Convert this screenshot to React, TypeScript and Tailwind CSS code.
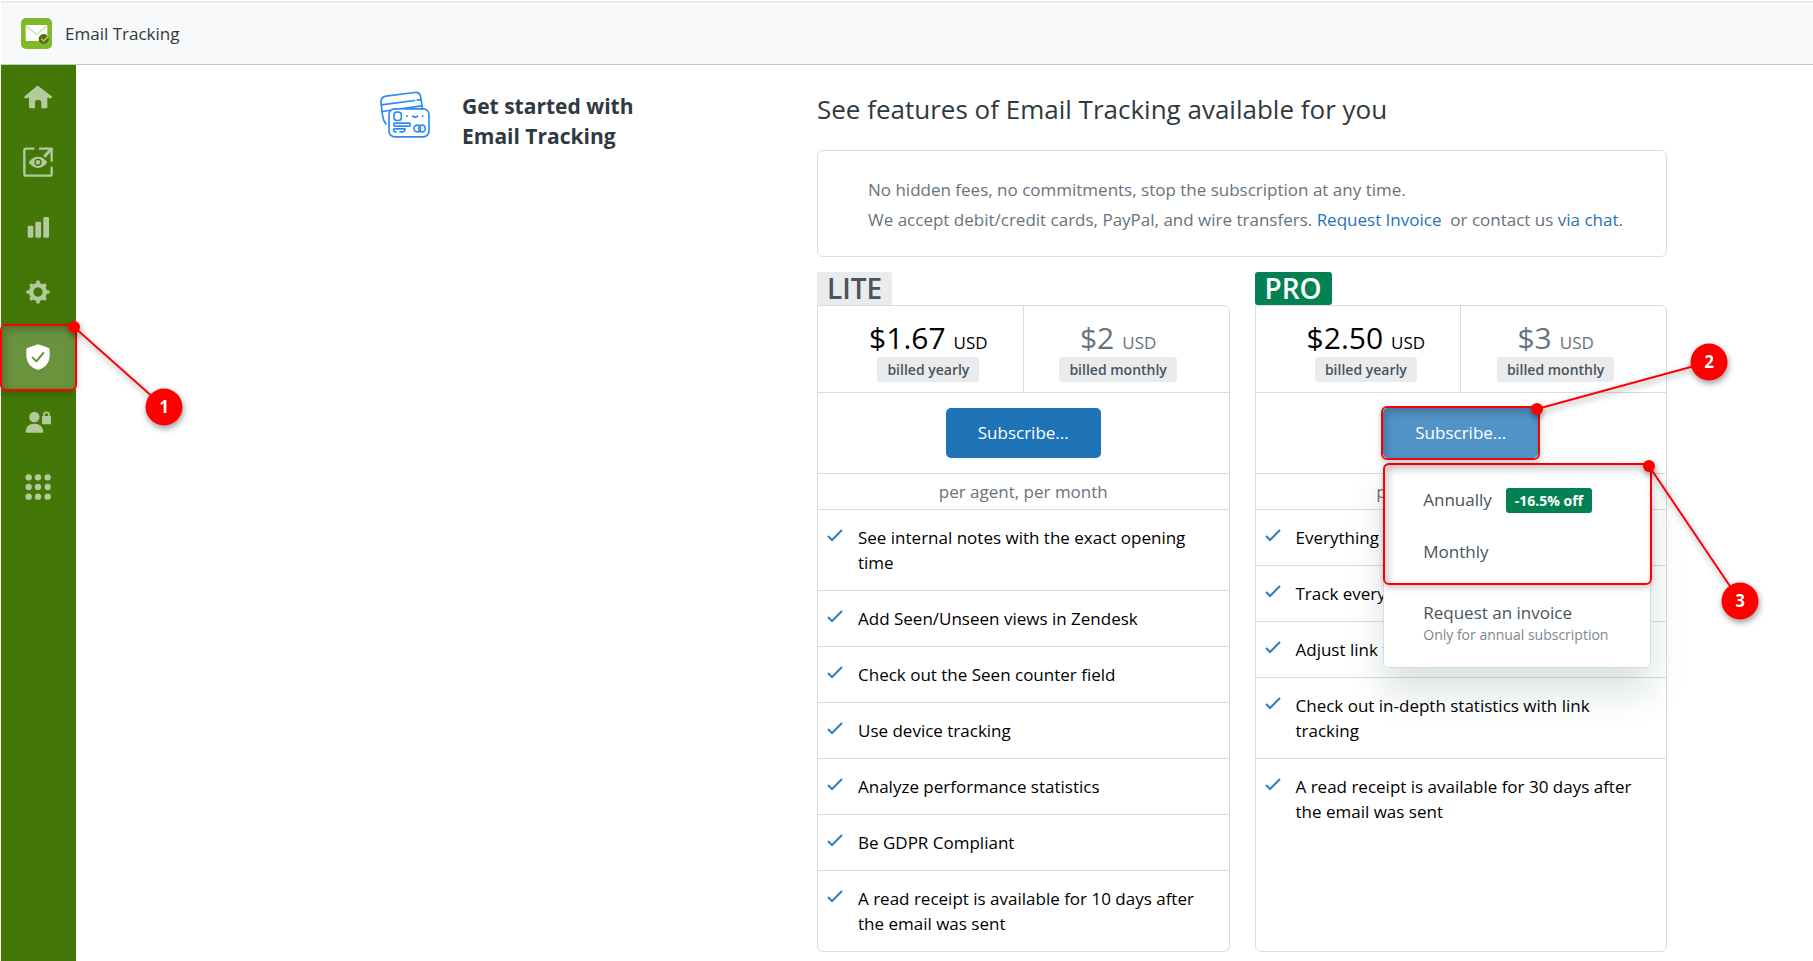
import type { ReactNode } from "react";

const LITE_FEATURES = [
  "See internal notes with the exact opening time",
  "Add Seen/Unseen views in Zendesk",
  "Check out the Seen counter field",
  "Use device tracking",
  "Analyze performance statistics",
  "Be GDPR Compliant",
  "A read receipt is available for 10 days after the email was sent",
];

const PRO_FEATURES = [
  "Everything in Lite",
  "Track every link",
  "Adjust link tracking",
  "Check out in-depth statistics with link tracking",
  "A read receipt is available for 30 days after the email was sent",
];

function NavIcon({ children }: { children: ReactNode }) {
  return (
    <svg viewBox="0 0 90 90" className="size-[30px]" fill="currentColor" aria-hidden="true">
      {children}
    </svg>
  );
}

const NAV: { label: string; icon: ReactNode }[] = [
  {
    label: "Home",
    icon: (
      <NavIcon>
        <path d="M45 11 L86 43 Q89 46 85 49 Q82 51 78 47 L73 47 V75 Q73 79 69 79 H55 V61 Q55 53 45 53 Q36 53 36 61 V79 H22 Q18 79 18 75 V47 L12 48 Q8 51 5 48 Q2 46 5 43 L41 13 Q45 9 49 13 Z" />
      </NavIcon>
    ),
  },
  {
    label: "Link tracking",
    icon: (
      <NavIcon>
        <g fill="none" stroke="currentColor" strokeWidth="7" strokeLinecap="round">
          <path d="M31 5 H9 Q4 5 4 10 V81 Q4 86 9 86 H81 Q86 86 86 81 V62" />
          <path d="M51 5 H86 V41" />
          <path d="M82 9 L66 27" strokeWidth="9" />
        </g>
        <path d="M17 46 Q29 29 45 29 T73 46 Q61 63 45 63 T17 46 Z" />
        <circle cx="45" cy="46" r="9" fill="none" stroke="#437808" strokeWidth="4" />
      </NavIcon>
    ),
  },
  {
    label: "Statistics",
    icon: (
      <NavIcon>
        <rect x="14" y="41" width="17" height="36" rx="4" />
        <rect x="37" y="29" width="17" height="48" rx="4" />
        <rect x="61" y="15" width="17" height="62" rx="4" />
      </NavIcon>
    ),
  },
  {
    label: "Settings",
    icon: (
      <NavIcon>
        <path
          fillRule="evenodd"
          d="M45 18 a27 27 0 1 0 .1 0 Z M45 31 a14 14 0 1 1 -.1 0 Z"
        />
        <g stroke="currentColor" strokeWidth="11" strokeLinecap="round">
          <path d="M45 20 V15 M45 70 V75 M20 45 H15 M70 45 H75 M28 28 L25 25 M62 62 L65 65 M62 28 L65 25 M28 62 L25 65" />
        </g>
      </NavIcon>
    ),
  },
  {
    label: "Subscription",
    icon: (
      <NavIcon>
        <path d="M45 7 Q46 7 77 18 Q80 20 80 24 V44 Q78 73 45 84 Q12 73 10 44 V24 Q10 20 13 18 Z" />
        <path
          d="M29 47 L40 58 L61 33"
          fill="none"
          stroke="#6a933d"
          strokeWidth="6"
          strokeLinecap="round"
          strokeLinejoin="round"
        />
      </NavIcon>
    ),
  },
  {
    label: "Permissions",
    icon: (
      <NavIcon>
        <circle cx="34" cy="30" r="15.500" />
        <path d="M8 74 Q9 50 34 50 T61 74 Q61 77 58 77 H11 Q8 77 8 74 Z" />
        <rect x="57" y="27" width="27" height="25" rx="3" />
        <path d="M63 29 V22 Q63 16 70.500 16 T78 22 V29" fill="none" stroke="currentColor" strokeWidth="5" />
      </NavIcon>
    ),
  },
  {
    label: "More apps",
    icon: (
      <NavIcon>
        {[16, 45, 74].map((y) =>
          [17, 45, 74].map((x) => <circle key={`${x}-${y}`} cx={x} cy={y} r="9.500" />),
        )}
      </NavIcon>
    ),
  },
];

/** Numbered callout whose line starts at the top right corner of its positioned parent. */
function Callout({ n, dx, dy }: { n: number; dx: number; dy: number }) {
  return (
    <svg
      className="pointer-events-none absolute top-0 right-0 z-30 size-px overflow-visible drop-shadow-[1px_3px_3px_rgba(0,0,0,0.4)]"
      aria-hidden="true"
    >
      <line x1="0" y1="1" x2={dx} y2={dy} stroke="#f00" strokeWidth="2" />
      <circle cx="0" cy="1" r="6" fill="#f00" />
      <circle cx={dx} cy={dy} r="18.500" fill="#f00" />
      <text
        x={dx}
        y={dy + 6}
        textAnchor="middle"
        fill="#fff"
        className="text-[17px] font-bold"
      >
        {n}
      </text>
    </svg>
  );
}

function Marker({ className, n, dx, dy }: { className: string; n: number; dx: number; dy: number }) {
  return (
    <span
      className={`pointer-events-none absolute z-20 rounded-md border-2 border-[#f00] shadow-[0_3px_6px_rgba(0,0,0,0.2),inset_3px_4px_8px_rgba(0,0,0,0.22)] ${className}`}
    >
      <Callout n={n} dx={dx} dy={dy} />
    </span>
  );
}

function Logo() {
  return (
    <svg viewBox="0 0 93 93" className="size-[31px]" aria-hidden="true">
      <rect width="93" height="93" rx="15" fill="#80b927" />
      <path d="M2 31 V62 M91 31 V62" stroke="#a3ce52" strokeWidth="2" strokeDasharray="4 5" />
      <rect x="14" y="21" width="65" height="48" rx="2" fill="#fff" />
      <path d="M15 24 L47 49 L78 24" fill="none" stroke="#d3e2c0" strokeWidth="5" />
      <circle cx="68" cy="63" r="15" fill="#4a741c" />
      <path d="M61 62 L68 69 L82 55" fill="none" stroke="#f2b75b" strokeWidth="4" />
    </svg>
  );
}

function CardsIcon() {
  return (
    <svg
      viewBox="0 0 150 140"
      className="h-[47px] w-[50px] shrink-0"
      fill="none"
      stroke="#2e8af0"
      strokeWidth="5"
      strokeLinecap="round"
      aria-hidden="true"
    >
      <path d="M18 98 Q10 90 8 75 L3 36 Q1 18 18 15 L104 4 Q120 2 122 18 L127 50" />
      <path d="M4 41 L104 28 M112 27 L122 25 M7 61 L124 44" />
      <rect x="27" y="53" width="120" height="84" rx="17" fill="#fff" />
      <rect x="42" y="63" width="22" height="25" rx="8" />
      <path d="M81 74 V76 M128 74 V76 M98 75 Q105 81 113 75" />
      <rect x="41" y="96" width="50" height="9" rx="4" />
      <path d="M54 113 H75 Q75 122 68 122 H60 M54 113 H45 Q40 113 41 118 T48 122" />
      <circle cx="112" cy="112" r="10" />
      <circle cx="126" cy="112" r="10" />
    </svg>
  );
}

function Price({ amount, period, strong }: { amount: string; period: string; strong?: boolean }) {
  return (
    <div
      className={`flex flex-1 flex-col items-center border-[#d8dcde] pt-3 ${
        strong ? "pl-4 font-medium text-black" : "border-l pr-4 text-[#68737d]"
      }`}
    >
      <div>
        <span className="text-[30px] leading-[39px]">{amount}</span>
        <span className="ml-2 text-[17px]">USD</span>
      </div>
      <span className="rounded-[3px] bg-[#e9ebed] px-[10px] text-[14px] leading-[25px] font-semibold text-[#49545c]">
        {period}
      </span>
    </div>
  );
}

function Features({ items }: { items: string[] }) {
  return (
    <ul>
      {items.map((item) => (
        <li
          key={item}
          className="flex gap-[15px] border-[#d8dcde] py-[15px] pr-6 pl-[9px] text-[17px] leading-[25px] text-black not-last:border-b"
        >
          <svg
            viewBox="0 0 16 14"
            className="mt-1 h-[14px] w-4 shrink-0"
            fill="none"
            stroke="#337fbd"
            strokeWidth="2"
            aria-hidden="true"
          >
            <path d="M1 7 L5 11 L15 1" />
          </svg>
          {item}
        </li>
      ))}
    </ul>
  );
}

interface PlanProps {
  name: string;
  badge: string;
  yearly: string;
  monthly: string;
  features: string[];
  action: ReactNode;
}

function Plan({ name, badge, yearly, monthly, features, action }: PlanProps) {
  return (
    <section className="flex flex-1 flex-col">
      <h2
        className={`self-start rounded-[3px] px-[10px] text-[28px] leading-[33px] font-semibold ${badge}`}
      >
        {name}
      </h2>
      <div className="flex-1 rounded-md rounded-tl-none border border-[#d8dcde]">
        <div className="flex h-[87px] border-b border-[#d8dcde]">
          <Price amount={yearly} period="billed yearly" strong />
          <Price amount={monthly} period="billed monthly" />
        </div>
        <div className="flex justify-center border-b border-[#d8dcde] py-[15px]">{action}</div>
        <p className="border-b border-[#d8dcde] text-center text-[17px] leading-[35px] text-[#68737d]">
          per agent, per month
        </p>
        <Features items={features} />
      </div>
    </section>
  );
}

function SubscribeButton({ className }: { className: string }) {
  return (
    <button
      type="button"
      className={`h-[50px] w-[155px] rounded-[5px] text-[17px] text-white ${className}`}
    >
      Subscribe...
    </button>
  );
}

function SubscribeMenu() {
  return (
    <div
      role="menu"
      className="absolute top-14 left-0 z-10 flex h-[204px] w-[268px] flex-col rounded-[5px] border border-[#d8dcde] bg-white pt-[9px] text-[17px] text-[#49545c] shadow-[0_24px_36px_rgba(23,73,77,0.16)]"
    >
      <button type="button" role="menuitem" className="flex h-[52px] items-center gap-[14px] pl-[39px]">
        Annually
        <span className="rounded-[3px] bg-[#038153] px-[9px] text-[14px] leading-[25px] font-bold text-white">
          -16.5% off
        </span>
      </button>
      <button type="button" role="menuitem" className="h-[52px] pl-[39px] text-left">
        Monthly
      </button>
      <button type="button" role="menuitem" className="mt-[23px] pl-[39px] text-left">
        <span className="block leading-6">Request an invoice</span>
        <span className="block text-[14px] leading-5 text-[#7b868f]">Only for annual subscription</span>
      </button>
      <Marker className="-top-0.5 -left-px h-[122px] w-[269px]" n={3} dx={91} dy={136} />
    </div>
  );
}

export default function App() {
  return (
    <div className="flex min-h-screen flex-col bg-white pl-px font-['Open_Sans','Noto_Sans',sans-serif] text-[#2f3941]">
      <header className="mt-px flex h-16 items-center gap-[13px] border-t-2 border-b border-t-[#e9ebed] border-b-[#c2c8cc] bg-[#f8f9fa] pl-5">
        <Logo />
        <span className="text-[17px]">Email Tracking</span>
      </header>
      <div className="flex flex-1">
        <nav className="w-[75px] shrink-0 bg-[#437808]">
          {NAV.map(({ label, icon }) => {
            const active = label === "Subscription";
            return (
              <a
                key={label}
                href="#"
                aria-label={label}
                className={`relative flex h-[65px] items-center justify-center pr-px pb-px ${
                  active ? "bg-[#6a933d] text-white" : "text-[#b4c99c]"
                }`}
              >
                {icon}
                {active && <Marker className="-inset-x-px -inset-y-px" n={1} dx={90} dy={81} />}
              </a>
            );
          })}
        </nav>
        <main className="flex flex-1 justify-center pb-2 pl-[158px]">
          <div className="flex w-[437px] items-start gap-8 pt-[26px]">
            <CardsIcon />
            <h1 className="w-48 text-[21px] leading-[30px] font-bold">
              Get started with Email Tracking
            </h1>
          </div>
          <div className="flex w-[850px] flex-col">
            <h2 className="pt-6 text-[26px] leading-10">
              See features of Email Tracking available for you
            </h2>
            <p className="mt-[21px] rounded-md border border-[#d8dcde] pt-6 pr-8 pb-[21px] pl-[50px] text-[17px] leading-[30px] text-[#68737d]">
              No hidden fees, no commitments, stop the subscription at any time.
              <br />
              We accept debit/credit cards, PayPal, and wire transfers.{" "}
              <a href="#" className="text-[#1f73b7]">
                Request Invoice
              </a>
              &nbsp; or contact us{" "}
              <a href="#" className="text-[#1f73b7]">
                via chat
              </a>
              .
            </p>
            <div className="mt-[15px] flex gap-[25px]">
              <Plan
                name="LITE"
                badge="bg-[#e9ebed] text-[#49545c]"
                yearly="$1.67"
                monthly="$2"
                features={LITE_FEATURES}
                action={<SubscribeButton className="bg-[#1f73b7]" />}
              />
              <Plan
                name="PRO"
                badge="bg-[#038153] text-white"
                yearly="$2.50"
                monthly="$3"
                features={PRO_FEATURES}
                action={
                  <div className="relative">
                    <SubscribeButton className="bg-[#5293c7]" />
                    <Marker className="-inset-x-0.5 -inset-y-0.5" n={2} dx={172} dy={-46} />
                    <SubscribeMenu />
                  </div>
                }
              />
            </div>
          </div>
        </main>
      </div>
    </div>
  );
}
